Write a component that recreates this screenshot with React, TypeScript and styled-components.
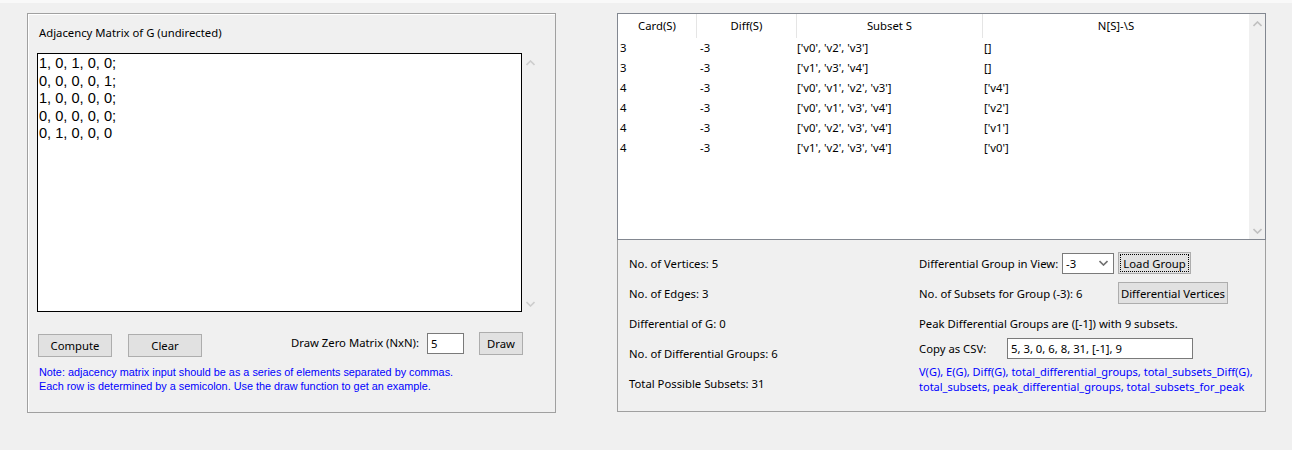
import React from 'react';
import styled, { createGlobalStyle } from 'styled-components';

const GlobalStyle = createGlobalStyle`
  html, body { margin: 0; padding: 0; background: #f0f0f0; }
  body {
    font-family: "Segoe UI", "Noto Sans", sans-serif;
    font-size: 11.3px;
    color: #000;
  }
  * { box-sizing: border-box; }
`;

const Page = styled.div`
  width: 1292px;
  height: 450px;
  border-top: 3px solid #f9f9f9;
  padding: 10px 0 0 27px;
  display: flex;
  align-items: flex-start;
  gap: 61px;
`;

const LeftPanel = styled.section`
  width: 529px;
  height: 400px;
  border: 1px solid #a0a0a0;
  box-shadow: inset 1px 1px 0 #fff;
  display: flex;
  flex-direction: column;
`;

const Title = styled.div`
  margin: 11px 0 0 11px;
  line-height: 16px;
  height: 16px;
`;

const EditorRow = styled.div`
  display: flex;
  margin: 12px 0 0 9px;
`;

const MatrixArea = styled.div`
  width: 485px;
  height: 259px;
  background: #fff;
  border: 1px solid #000;
  padding: 1px 1px;
  font-family: "Liberation Sans", Arial, sans-serif;
  font-size: 14.6px;
  line-height: 17.5px;
  white-space: pre;
`;

const VScroll = styled.div<{ $bg?: string; $w: number }>`
  width: ${(p) => p.$w}px;
  background: ${(p) => p.$bg || 'transparent'};
  display: flex;
  flex-direction: column;
  justify-content: space-between;
  align-items: center;
  padding: 7px 0 5px;
`;

const ControlsRow = styled.div`
  display: flex;
  align-items: flex-start;
  margin: 20px 32px 0 10px;
`;

const Button = styled.button<{ $w: number; $h?: number; $mt?: number; $focus?: boolean }>`
  width: ${(p) => p.$w}px;
  height: ${(p) => p.$h || 23}px;
  margin-top: ${(p) => p.$mt || 0}px;
  background: #e1e1e1;
  border: 1px solid #adadad;
  font-family: "Segoe UI", "Noto Sans", sans-serif;
  font-size: 11.3px;
  color: #000;
  padding: 0;
  white-space: nowrap;
  outline: ${(p) => (p.$focus ? '1px dotted #000' : 'none')};
  outline-offset: -3px;
`;

const Spacer = styled.div<{ $w: number }>`
  width: ${(p) => p.$w}px;
  flex: none;
`;

const Fill = styled.div`
  flex: 1;
`;

const FieldLabel = styled.span<{ $mt?: number }>`
  margin-top: ${(p) => p.$mt || 0}px;
  line-height: 16px;
  white-space: nowrap;
`;

const Entry = styled.div<{ $w: number; $h: number; $mt?: number }>`
  width: ${(p) => p.$w}px;
  height: ${(p) => p.$h}px;
  margin-top: ${(p) => p.$mt || 0}px;
  background: #fff;
  border: 1px solid #7a7a7a;
  padding: 0 3px;
  line-height: ${(p) => p.$h - 2}px;
  white-space: nowrap;
`;

const Note = styled.div`
  margin: 8px 0 0 11px;
  color: #0000ff;
  font-family: "Liberation Sans", Arial, sans-serif;
  font-size: 10.85px;
  line-height: 14px;
  white-space: nowrap;
`;

const RightPanel = styled.section`
  width: 649px;
  display: flex;
  flex-direction: column;
`;

const Tree = styled.div`
  height: 227px;
  border: 1px solid #828790;
  background: #fff;
  display: flex;
`;

const TreeBody = styled.div`
  flex: 1;
  display: grid;
  grid-template-columns: 79px 100px 186px 266px;
  grid-template-rows: 24px;
  grid-auto-rows: 20px;
  align-content: start;
`;

const HeadCell = styled.div<{ $last?: boolean }>`
  height: 24px;
  text-align: center;
  line-height: 24px;
  border-right: ${(p) => (p.$last ? 'none' : '1px solid #e5e5e5')};
`;

const Cell = styled.div<{ $pl: number }>`
  padding-left: ${(p) => p.$pl}px;
  line-height: 20px;
  white-space: nowrap;
`;

const Info = styled.div`
  height: 172px;
  border: 1px solid #a0a0a0;
  border-top: none;
  display: flex;
  padding: 8px 0 0 11px;
`;

const InfoLeft = styled.div`
  width: 290px;
  flex: none;
  display: grid;
  grid-auto-rows: 30px;
  align-items: center;
  align-content: start;
`;

const InfoRight = styled.div`
  flex: 1;
  min-width: 0;
  display: grid;
  grid-template-columns: 143px 56px auto;
  grid-template-rows: 30px 30px 30px;
  align-items: center;
  align-content: start;
  justify-items: start;
`;

const Wide = styled.div<{ $span: string }>`
  grid-column: ${(p) => p.$span};
  white-space: nowrap;
`;

const Combo = styled.div`
  width: 52px;
  height: 21px;
  background: #fff;
  border: 1px solid #7a7a7a;
  display: flex;
  align-items: center;
  justify-content: space-between;
  padding: 0 5px 0 3px;
`;

const CsvRow = styled.div`
  grid-column: 1 / 4;
  display: flex;
  align-items: center;
  height: 21px;
`;

const CsvLabel = styled.span`
  width: 88px;
  flex: none;
`;

const BlueText = styled.div`
  grid-column: 1 / 4;
  color: #0000ff;
  font-size: 11px;
  line-height: 14.7px;
  margin-top: 6px;
  white-space: nowrap;
`;

const Arrow = ({ up, color = '#c0c0c0' }: { up?: boolean; color?: string }) => (
  <svg width="9" height="6" viewBox="0 0 9 6">
    <polyline
      points={up ? '0.5,5 4.5,1 8.5,5' : '0.5,1 4.5,5 8.5,1'}
      fill="none"
      stroke={color}
      strokeWidth="1.6"
    />
  </svg>
);

const rows: [string, string, string, string][] = [
  ['3', '-3', "['v0', 'v2', 'v3']", '[]'],
  ['3', '-3', "['v1', 'v3', 'v4']", '[]'],
  ['4', '-3', "['v0', 'v1', 'v2', 'v3']", "['v4']"],
  ['4', '-3', "['v0', 'v1', 'v3', 'v4']", "['v2']"],
  ['4', '-3', "['v0', 'v2', 'v3', 'v4']", "['v1']"],
  ['4', '-3', "['v1', 'v2', 'v3', 'v4']", "['v0']"],
];

export default function App() {
  return (
    <>
      <GlobalStyle />
      <Page>
        <LeftPanel>
          <Title>Adjacency Matrix of G (undirected)</Title>
          <EditorRow>
            <MatrixArea>{'1, 0, 1, 0, 0;\n0, 0, 0, 0, 1;\n1, 0, 0, 0, 0;\n0, 0, 0, 0, 0;\n0, 1, 0, 0, 0'}</MatrixArea>
            <VScroll $w={17}>
              <Arrow up color="#cdcdcd" />
              <Arrow color="#cdcdcd" />
            </VScroll>
          </EditorRow>
          <ControlsRow>
            <Button $w={74} $mt={2}>Compute</Button>
            <Spacer $w={16} />
            <Button $w={74} $mt={2}>Clear</Button>
            <Fill />
            <FieldLabel $mt={3}>Draw Zero Matrix (NxN):</FieldLabel>
            <Spacer $w={8} />
            <Entry $w={37} $h={21} $mt={1}>5</Entry>
            <Spacer $w={15} />
            <Button $w={44}>Draw</Button>
          </ControlsRow>
          <Note>
            Note: adjacency matrix input should be as a series of elements separated by commas.
            <br />
            Each row is determined by a semicolon. Use the draw function to get an example.
          </Note>
        </LeftPanel>

        <RightPanel>
          <Tree>
            <TreeBody>
              <HeadCell>Card(S)</HeadCell>
              <HeadCell>Diff(S)</HeadCell>
              <HeadCell>Subset S</HeadCell>
              <HeadCell $last>N[S]-\S</HeadCell>
              {rows.map((r, i) => (
                <React.Fragment key={i}>
                  <Cell $pl={2}>{r[0]}</Cell>
                  <Cell $pl={3}>{r[1]}</Cell>
                  <Cell $pl={0}>{r[2]}</Cell>
                  <Cell $pl={1}>{r[3]}</Cell>
                </React.Fragment>
              ))}
            </TreeBody>
            <VScroll $w={16} $bg="#f0f0f0">
              <Arrow up />
              <Arrow />
            </VScroll>
          </Tree>
          <Info>
            <InfoLeft>
              <div>No. of Vertices: 5</div>
              <div>No. of Edges: 3</div>
              <div>Differential of G: 0</div>
              <div>No. of Differential Groups: 6</div>
              <div>Total Possible Subsets: 31</div>
            </InfoLeft>
            <InfoRight>
              <Wide $span="1 / 2">Differential Group in View:</Wide>
              <Combo>
                <span>-3</span>
                <Arrow color="#707070" />
              </Combo>
              <Button $w={73} $h={22} $focus>Load Group</Button>
              <Wide $span="1 / 3">No. of Subsets for Group (-3): 6</Wide>
              <Button $w={110} $h={22}>Differential Vertices</Button>
              <Wide $span="1 / 4">Peak Differential Groups are ([-1]) with 9 subsets.</Wide>
              <CsvRow>
                <CsvLabel>Copy as CSV:</CsvLabel>
                <Entry $w={186} $h={21}>5, 3, 0, 6, 8, 31, [-1], 9</Entry>
              </CsvRow>
              <BlueText>
                V(G), E(G), Diff(G), total_differential_groups, total_subsets_Diff(G),
                <br />
                total_subsets, peak_differential_groups, total_subsets_for_peak
              </BlueText>
            </InfoRight>
          </Info>
        </RightPanel>
      </Page>
    </>
  );
}
